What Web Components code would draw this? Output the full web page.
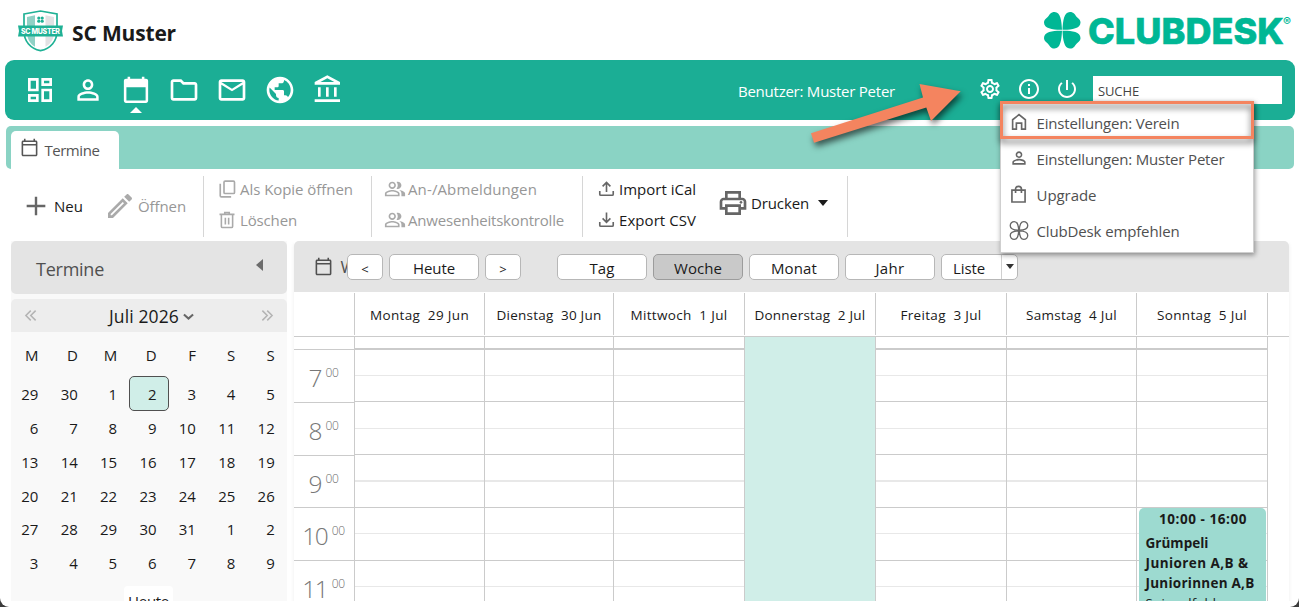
<!DOCTYPE html>
<html lang="de">
<head>
<meta charset="utf-8">
<title>ClubDesk - Termine</title>
<style>
* {
  box-sizing: border-box;
}

html {
  background: #3c3c3c;
}

body {
  margin: 0;
  height: 607px;
  overflow: hidden;
  background: #fff;
  border-radius: 0 0 9px 9px;
  font-family: "Open Sans", "Noto Sans", sans-serif;
  font-size: 15px;
  color: #1a1a1a;
}
</style>
</head>
<body>
<club-app></club-app>

<script>
// Icons, all on a 24 x 24 grid
const ICONS = {
  dashboard: '<path d="M19 5v2h-4V5h4M9 5v6H5V5h4m10 8v6h-4v-6h4M9 17v2H5v-2h4M21 3h-8v6h8V3zM11 3H3v10h8V3zm10 8h-8v10h8V11zm-10 4H3v6h8v-6z"/>',
  person: '<path d="M12 5.9c1.16 0 2.1.94 2.1 2.1s-.94 2.1-2.1 2.1S9.9 9.16 9.9 8s.94-2.1 2.1-2.1m0 9c2.97 0 6.1 1.46 6.1 2.1v1.1H5.9V17c0-.64 3.13-2.1 6.1-2.1M12 4C9.79 4 8 5.79 8 8s1.79 4 4 4 4-1.79 4-4-1.79-4-4-4zm0 9c-2.67 0-8 1.34-8 4v3h16v-3c0-2.66-5.33-4-8-4z"/>',
  event: '<path d="M19.5 3.5h-1.2V2h-1.9v1.5H7.6V2H5.7v1.5H4.500c-.9 0-1.600.700-1.600 1.600v15c0 .900.700 1.600 1.600 1.600h15c.900 0 1.600-.700 1.600-1.600v-15c0-.900-.700-1.600-1.600-1.600zm-.300 16.300H4.800V10h14.400z"/>',
  calendar: '<path d="M20 3h-1V1h-2v2H7V1H5v2H4c-1.1 0-2 .9-2 2v16c0 1.1.9 2 2 2h16c1.1 0 2-.9 2-2V5c0-1.1-.9-2-2-2zm0 18H4V9.500h16V21zM20 7.500H4V5h16z"/>',
  folder: '<path d="M9.17 6l2 2H20v10H4V6h5.17M10 4H4c-1.1 0-1.99.9-1.99 2L2 18c0 1.1.9 2 2 2h16c1.1 0 2-.9 2-2V8c0-1.1-.9-2-2-2h-8l-2-2z"/>',
  mail: '<path d="M22 6c0-1.1-.9-2-2-2H4c-1.1 0-2 .9-2 2v12c0 1.1.9 2 2 2h16c1.1 0 2-.9 2-2V6zm-2 0l-8 5-8-5h16zm0 12H4V8l8 5 8-5v10z"/>',
  globe: '<path d="M12 2C6.48 2 2 6.48 2 12s4.480 10 10 10 10-4.480 10-10S17.520 2 12 2zm-1 17.930c-3.950-.490-7-3.850-7-7.930 0-.620.080-1.210.210-1.790L9 15v1c0 1.100.900 2 2 2v1.930zm6.900-2.540c-.260-.810-1-1.390-1.900-1.390h-1v-3c0-.550-.450-1-1-1H8v-2h2c.550 0 1-.450 1-1V7h2c1.100 0 2-.900 2-2v-.410c2.930 1.190 5 4.060 5 7.410 0 2.080-.800 3.970-2.100 5.390z"/>',
  bank: '<path d="M6.500 10h-2v7h2v-7zm6 0h-2v7h2v-7zm8.500 9H2v2h19v-2zm-2.500-9h-2v7h2v-7zm-7-6.740L16.710 6H6.290l5.210-2.740m0-2.260L2 6v2h19V6l-9.500-5z"/>',
  settings: '<path d="M19.43 12.98c.04-.32.07-.64.07-.98 0-.34-.03-.66-.07-.98l2.11-1.65c.19-.15.24-.42.12-.64l-2-3.46c-.09-.16-.26-.25-.44-.25-.06 0-.12.01-.17.03l-2.49 1c-.52-.4-1.08-.73-1.69-.98l-.38-2.65C14.46 2.18 14.25 2 14 2h-4c-.25 0-.46.18-.49.42l-.38 2.65c-.61.25-1.17.59-1.69.98l-2.49-1c-.06-.02-.12-.03-.18-.03-.17 0-.34.09-.43.25l-2 3.46c-.13.22-.07.49.12.64l2.11 1.65c-.04.32-.07.65-.07.98 0 .33.03.66.07.98l-2.11 1.65c-.19.15-.24.42-.12.64l2 3.46c.09.16.26.25.44.25.06 0 .12-.01.17-.03l2.49-1c.52.4 1.08.73 1.69.98l.38 2.65c.03.24.24.42.49.42h4c.25 0 .46-.18.49-.42l.38-2.65c.61-.25 1.17-.59 1.69-.98l2.49 1c.06.02.12.03.18.03.17 0 .34-.09.43-.25l2-3.46c.12-.22.07-.49-.12-.64l-2.11-1.65zm-1.98-1.71c.04.31.05.52.05.73 0 .21-.02.43-.05.73l-.14 1.13.89.7 1.08.84-.7 1.21-1.27-.51-1.04-.42-.9.68c-.43.32-.84.56-1.25.73l-1.06.43-.16 1.13-.2 1.35h-1.4l-.19-1.35-.16-1.13-1.06-.43c-.43-.18-.83-.41-1.23-.71l-.91-.7-1.06.43-1.27.51-.7-1.21 1.08-.84.89-.7-.14-1.13c-.03-.31-.05-.54-.05-.74s.02-.43.05-.73l.14-1.13-.89-.7-1.08-.84.7-1.21 1.27.51 1.04.42.9-.68c.43-.32.84-.56 1.25-.73l1.06-.43.16-1.13.2-1.35h1.39l.19 1.35.16 1.13 1.06.43c.43.18.83.41 1.23.71l.91.7 1.06-.43 1.27-.51.7 1.21-1.07.85-.89.7.14 1.13zM12 8c-2.21 0-4 1.79-4 4s1.79 4 4 4 4-1.79 4-4-1.79-4-4-4zm0 6c-1.1 0-2-.9-2-2s.9-2 2-2 2 .9 2 2-.9 2-2 2z"/>',
  info: '<path d="M11 7h2v2h-2zm0 4h2v6h-2zm1-9C6.48 2 2 6.48 2 12s4.48 10 10 10 10-4.48 10-10S17.52 2 12 2zm0 18c-4.41 0-8-3.59-8-8s3.59-8 8-8 8 3.59 8 8-3.59 8-8 8z"/>',
  power: '<path d="M13 3h-2v10h2V3zm4.83 2.17l-1.42 1.42C17.99 7.86 19 9.81 19 12c0 3.87-3.13 7-7 7s-7-3.13-7-7c0-2.19 1.01-4.14 2.58-5.42L6.17 5.17C4.23 6.82 3 9.26 3 12c0 4.97 4.03 9 9 9s9-4.03 9-9c0-2.74-1.23-5.18-3.17-6.83z"/>',
  add: '<path d="M19 12.900h-6.100V19h-1.800v-6.100H5v-1.800h6.100V5h1.800v6.100H19z"/>',
  edit: '<path d="M14.06 9.02l.92.92L5.92 19H5v-.92l9.060-9.060M17.660 3c-.250 0-.510.100-.700.290l-1.830 1.830 3.750 3.750 1.830-1.830c.390-.390.390-1.020 0-1.410l-2.340-2.340c-.200-.200-.450-.290-.710-.290zm-3.600 3.190L3 17.250V21h3.750L17.810 9.940l-3.750-3.750z"/>',
  copy: '<path fill="none" stroke="currentColor" stroke-width="2.200" d="M9.500 1.500h11q1.500 0 1.500 1.500v13.500q0 1.500-1.500 1.500h-11Q8 18 8 16.500V3q0-1.500 1.500-1.500zM3 5v16q0 1.500 1.500 1.500h13"/>',
  trash: '<path fill="none" stroke="currentColor" stroke-width="2.100" d="M2 4.500h20M9 4V2h6v2M4.500 4.500v16q0 1.500 1.500 1.500h12q1.500 0 1.500-1.500v-16M9.800 9v9M14.200 9v9"/>',
  people: '<path d="M16.670 13.130C18.040 14.060 19 15.320 19 17v3h4v-3c0-2.180-3.570-3.470-6.330-3.870zM15 12c2.210 0 4-1.790 4-4s-1.790-4-4-4c-.470 0-.910.100-1.330.240C14.500 5.270 15 6.580 15 8s-.500 2.730-1.330 3.760c.420.140.860.240 1.330.240zM9 12c2.210 0 4-1.790 4-4s-1.790-4-4-4-4 1.790-4 4 1.790 4 4 4zm0-6.200c1.200 0 2.200 1 2.200 2.200s-1 2.200-2.200 2.200S6.800 9.200 6.800 8 7.800 5.800 9 5.800zM9 13c-2.670 0-8 1.340-8 4v3h16v-3c0-2.660-5.330-4-8-4zm6.200 5.200H2.800V17c.2-.7 3.500-2.200 6.200-2.200s6 1.500 6.200 2.200z"/>',
  upload: '<path fill="none" stroke="currentColor" stroke-width="2.300" d="M2.500 15.500V20q0 1.500 1.500 1.500h16q1.500 0 1.500-1.500v-4.500M12 17V3.500M6.500 9L12 3.500 17.500 9"/>',
  download: '<path fill="none" stroke="currentColor" stroke-width="2.300" d="M2.500 15.500V20q0 1.500 1.500 1.500h16q1.500 0 1.500-1.500v-4.500M12 2v13.500M6.500 10.500l5.500 5.500 5.500-5.500"/>',
  print: '<path d="M19 8h-1V3H6v5H5c-1.66 0-3 1.34-3 3v6h4v4h12v-4h4v-6c0-1.66-1.34-3-3-3zM8 5h8v3H8V5zm8 12v2H8v-4h8v2zm2-2v-2H6v2H4v-4c0-.55.45-1 1-1h14c.55 0 1 .45 1 1v4h-2z"/><circle cx="18" cy="11.500" r="1"/>',
  home: '<path fill="none" stroke="currentColor" stroke-width="2.200" d="M3.500 21.500V9L12 2.200 20.500 9v12.500h-5V13.500h-7v8z"/>',
  bag: '<path fill="none" stroke="currentColor" stroke-width="2.100" d="M3.700 6.500h16.600v15H3.700zM8.300 10V5.200Q8.300 1.700 12 1.700t3.700 3.500V10"/>',
  clover: '<path fill="none" stroke="currentColor" stroke-width="1.600" d="M11.600 11.600C6 11.400 1.500 9.700 1.500 6.200 1.500 3.500 3.600 1.300 6.300 1.300c3.600 0 5.100 4.700 5.300 10.300zM12.400 11.600C18 11.400 22.500 9.700 22.500 6.200c0-2.700-2.100-4.900-4.800-4.900-3.600 0-5.100 4.700-5.300 10.300zM11.600 12.400C6 12.600 1.500 14.300 1.500 17.800c0 2.700 2.100 4.900 4.800 4.900 3.600 0 5.100-4.700 5.300-10.300zM12.400 12.400C18 12.600 22.500 14.300 22.500 17.800c0 2.700-2.100 4.900-4.800 4.900-3.600 0-5.100-4.700-5.300-10.300z"/>',
  left: '<path fill="none" stroke="currentColor" stroke-width="2.800" d="M12.500 3L3.500 12l9 9M21.500 3l-9 9 9 9"/>',
  right: '<path fill="none" stroke="currentColor" stroke-width="2.800" d="M2.500 3l9 9-9 9M11.500 3l9 9-9 9"/>',
  down: '<path fill="none" stroke="currentColor" stroke-width="4.500" d="M2 7.500l10 9 10-9"/>',
};

// Small helper so every component gets its shadow root the same way
class BaseElement extends HTMLElement {
  constructor() {
    super();
    const shadow = this.attachShadow({ mode: 'open' });
    const template = document.createElement('template');
    template.innerHTML = `<style>* { box-sizing: border-box; }</style>${this.render()}`;
    shadow.append(template.content.cloneNode(true));
  }

  render() {
    return '<slot></slot>';
  }
}

class ClubIcon extends BaseElement {
  render() {
    return `
<style>
:host {
  display: block;
  flex: none;
}
svg {
  display: block;
}
</style>
<svg viewBox="0 0 24 24" fill="currentColor" aria-hidden="true"></svg>`;
  }

  connectedCallback() {
    const size = this.getAttribute('size') || 24;
    const svg = this.shadowRoot.querySelector('svg');
    svg.setAttribute('width', size);
    svg.setAttribute('height', size);
    svg.innerHTML = ICONS[this.getAttribute('name')];
  }
}

// One line of text, tracked so that it fills the given width
class ClubText extends BaseElement {
  render() {
    return `
<style>
:host {
  display: block;
  flex: none;
}
span {
  display: inline-block;
  white-space: pre;
}
</style>
<span><slot></slot></span>`;
  }

  connectedCallback() {
    const width = Number(this.getAttribute('width'));
    const span = this.shadowRoot.querySelector('span');
    const natural = span.getBoundingClientRect().width;
    if (!width || !natural) return;
    const spacing = (width - natural) / this.textContent.length;
    span.style.letterSpacing = `${spacing.toFixed(3)}px`;
  }
}

class ClubHeader extends BaseElement {
  render() {
    return `
<style>
:host {
  display: flex;
  height: 60px;
  padding: 10px 8px 0 18px;
}
.crest {
  flex: none;
  width: 45px;
  height: 42px;
}
.name {
  margin: 5px auto 0 9px;
  font-size: 21px;
  font-weight: 700;
  line-height: 36px;
}
.logo {
  display: flex;
  color: #00b795;
  margin-top: 2px;
}
.brand {
  margin: -2px 0 0 7px;
  font: 800 36px/42px Inter, sans-serif;
  -webkit-text-stroke: 0.6px #00b795;
}
.mark {
  font: 600 12px/14px Inter, sans-serif;
  margin: 3px 0 0 -1px;
}
</style>
<svg class="crest" viewBox="0 0 45 42">
  <path d="M6 4L22.500 1 39 4v17c0 10-6 17.500-16.500 19.700C12 38.500 6 31 6 21z" fill="#fff" stroke="#1fb195" stroke-width="1.700"/>
  <path d="M9 7l8-1.700v31.500C11.500 33.500 9 28 9 22z" fill="#8fd1c5"/>
  <path d="M27.500 5.300L36 7v15c0 6-2.500 11.500-8.500 14.800z" fill="#e2e2e4"/>
  <g fill="#1fb195"><circle cx="20.800" cy="8" r="1.600"/><circle cx="24.200" cy="8" r="1.600"/><circle cx="20.800" cy="11.200" r="1.600"/><circle cx="24.200" cy="11.200" r="1.600"/><path d="M0 15.500h45l-1 5.500 1 5.500H0L1 21z"/></g>
  <text x="22.500" y="23.700" fill="#fff" font-family="Inter, sans-serif" font-weight="800" font-size="7" text-anchor="middle" textLength="39">SC MUSTER</text>
</svg>
<club-text class="name" width="104">SC Muster</club-text>
<div class="logo">
  <svg width="37" height="37" viewBox="0 0 37 37" fill="#00b795">
    <path id="leaf" d="M18 17.700C10 17.900 0 17 0 10.500 0 8.500 1 7.300 2.600 6 4.300 4.700 4.900 3.300 6.200 1.800 7.300.5 8.800 0 10.600 0 16.500 0 17.600 9 18 17.700z"/>
    <path d="M18 17.700C10 17.900 0 17 0 10.500 0 8.500 1 7.300 2.600 6 4.300 4.700 4.900 3.300 6.200 1.800 7.300.5 8.800 0 10.600 0 16.500 0 17.600 9 18 17.700z" transform="matrix(-1 0 0 1 36.500 0)"/>
    <path d="M18 17.700C10 17.900 0 17 0 10.500 0 8.500 1 7.300 2.600 6 4.300 4.700 4.900 3.300 6.200 1.800 7.300.5 8.800 0 10.600 0 16.500 0 17.600 9 18 17.700z" transform="matrix(1 0 0 -1 0 36.500)"/>
    <path d="M18 17.700C10 17.900 0 17 0 10.500 0 8.500 1 7.300 2.600 6 4.300 4.700 4.900 3.300 6.200 1.800 7.300.5 8.800 0 10.600 0 16.500 0 17.600 9 18 17.700z" transform="matrix(-1 0 0 -1 36.500 36.500)"/>
  </svg>
  <club-text class="brand" width="196">CLUBDESK</club-text>
  <span class="mark">®</span>
</div>`;
  }
}

class ClubMenu extends BaseElement {
  render() {
    return `
<style>
:host {
  display: block;
  width: 254px;
  height: 152px;
  padding-top: 4px;
  background: #fff;
  border: 1px solid #cfcfcf;
  box-shadow: 1px 2px 5px rgba(0, 0, 0, 0.4);
  color: #505050;
}
.item {
  display: flex;
  align-items: center;
  height: 36px;
  padding-left: 7.500px;
  line-height: 24px;
}
.item club-text {
  margin: -3px 0 0 8px;
}
club-icon {
  width: 20px;
  display: flex;
  justify-content: center;
  margin-top: -4px;
  color: #666;
}
.marker {
  position: absolute;
  left: -1px;
  top: -1px;
  width: 254px;
  height: 38px;
  border: 3px solid #f4845f;
  filter: drop-shadow(0 4px 3px rgba(0, 0, 0, 0.6));
}
</style>
<div class="item"><club-icon name="home" size="18"></club-icon><club-text width="143">Einstellungen: Verein</club-text></div>
<div class="item"><club-icon name="person" size="22"></club-icon><club-text width="188">Einstellungen: Muster Peter</club-text></div>
<div class="item"><club-icon name="bag" size="19"></club-icon><club-text width="60">Upgrade</club-text></div>
<div class="item"><club-icon name="clover" size="21"></club-icon><club-text width="143">ClubDesk empfehlen</club-text></div>
<div class="marker"></div>`;
  }
}

class ClubNavbar extends BaseElement {
  render() {
    return `
<style>
:host {
  position: relative;
  display: flex;
  height: 60px;
  margin: 0 4px 0 5px;
  padding: 0 13px 0 11.300px;
  border-radius: 9px;
  background: #1bae95;
  color: #fff;
}
nav {
  display: flex;
  padding-top: 6px;
}
.entry {
  width: 48px;
  height: 48px;
  display: flex;
  flex-direction: column;
  align-items: center;
  justify-content: center;
}
.entry.active {
  padding-top: 7px;
}
.entry.active::after {
  content: "";
  margin-top: 1px;
  border: 6px solid transparent;
  border-top: 0;
  border-bottom-color: #fff;
}
.user {
  margin: 20px 0 0 auto;
  line-height: 22px;
}
.tools {
  display: flex;
  gap: 14.500px;
  margin: 17px 14px 0 83px;
}
.search {
  width: 189px;
  height: 28px;
  margin-top: 16px;
  padding: 2px 5px;
  background: #fff;
  color: #444;
  font-size: 13px;
  line-height: 26px;
}
club-menu {
  position: absolute;
  left: 995px;
  top: 41px;
  z-index: 2;
}
.arrow {
  position: absolute;
  left: 795px;
  top: 10px;
  z-index: 3;
  overflow: visible;
  filter: drop-shadow(2px 4px 3px rgba(0, 0, 0, 0.6));
}
</style>
<nav>
  <div class="entry"><club-icon name="dashboard" size="32"></club-icon></div>
  <div class="entry"><club-icon name="person" size="32"></club-icon></div>
  <div class="entry active"><club-icon name="event" size="32"></club-icon></div>
  <div class="entry"><club-icon name="folder" size="32"></club-icon></div>
  <div class="entry"><club-icon name="mail" size="32"></club-icon></div>
  <div class="entry"><club-icon name="globe" size="32"></club-icon></div>
  <div class="entry"><club-icon name="bank" size="32"></club-icon></div>
</nav>
<club-text class="user" width="157">Benutzer: Muster Peter</club-text>
<div class="tools">
  <club-icon name="settings"></club-icon>
  <club-icon name="info"></club-icon>
  <club-icon name="power"></club-icon>
</div>
<div class="search"><club-text width="41">SUCHE</club-text></div>
<svg class="arrow" width="180" height="90"><path d="M11 63.300L123 27.500 119.500 14 160.700 21.300 131 51 126.300 37.500 14 72.700z" fill="#f4845f"/></svg>
<club-menu></club-menu>`;
  }
}

class ClubTabs extends BaseElement {
  render() {
    return `
<style>
:host {
  display: flex;
  align-items: flex-end;
  height: 43px;
  margin: 6px 5px 0 6px;
  padding-left: 5px;
  border-radius: 5px;
  background: #8ad3c4;
}
.tab {
  display: flex;
  width: 108px;
  height: 38px;
  padding: 7px 9.400px;
  gap: 5px;
  border-radius: 5px 5px 0 0;
  background: #fff;
  color: #555;
}
club-text {
  line-height: 24px;
}
</style>
<div class="tab"><club-icon name="calendar" size="19"></club-icon><club-text width="55">Termine</club-text></div>`;
  }
}

class ToolButton extends BaseElement {
  render() {
    return `
<style>
:host {
  display: flex;
  align-items: center;
  height: 31px;
  color: #1a1a1a;
}
:host([disabled]) {
  color: #979797;
}
club-icon {
  color: #666;
}
:host([disabled]) club-icon {
  color: #aaa;
}
club-text {
  margin-left: var(--gap, 5px);
}
</style>
<club-icon></club-icon><club-text></club-text><slot></slot>`;
  }

  constructor() {
    super();
    const icon = this.shadowRoot.querySelector('club-icon');
    const text = this.shadowRoot.querySelector('club-text');
    icon.setAttribute('name', this.getAttribute('icon'));
    icon.setAttribute('size', this.getAttribute('size'));
    text.setAttribute('width', this.getAttribute('width'));
    text.textContent = this.getAttribute('label');
  }
}

class ClubToolbar extends BaseElement {
  render() {
    return `
<style>
:host {
  display: flex;
  height: 72px;
  padding: 4px 0 0 20px;
}
.group {
  display: flex;
  height: 62px;
  align-items: center;
}
.stack {
  display: flex;
  flex-direction: column;
}
.line {
  width: 1px;
  height: 61px;
  margin-top: 3px;
  background: #d6d6d6;
}
.caret {
  margin-left: 9px;
  border: 5px solid transparent;
  border-top: 6px solid #1a1a1a;
  border-bottom: 0;
}
</style>
<div class="group" style="gap: 21px; margin-right: 17px; padding-top: 4px; --gap: 2px">
  <tool-button icon="add" size="32" label="Neu" width="29"></tool-button>
  <tool-button icon="edit" size="32" label="Öffnen" width="48" disabled></tool-button>
</div>
<div class="line"></div>
<div class="stack" style="margin: 0 18px 0 14px; --gap: 4px">
  <tool-button icon="copy" size="18" label="Als Kopie öffnen" width="113" disabled></tool-button>
  <tool-button icon="trash" size="18" label="Löschen" width="57" disabled></tool-button>
</div>
<div class="line"></div>
<div class="stack" style="margin: 0 18px 0 12px; --gap: 2px">
  <tool-button icon="people" size="22" label="An-/Abmeldungen" width="129" disabled></tool-button>
  <tool-button icon="people" size="22" label="Anwesenheitskontrolle" width="156" disabled></tool-button>
</div>
<div class="line"></div>
<div class="stack" style="margin: 0 21px 0 15px; --gap: 4px">
  <tool-button icon="upload" size="17" label="Import iCal" width="77"></tool-button>
  <tool-button icon="download" size="17" label="Export CSV" width="77"></tool-button>
</div>
<div class="group" style="--gap: 2px; padding-bottom: 3px; margin-right: 19px">
  <tool-button icon="print" size="32" label="Drucken" width="58"><span class="caret"></span></tool-button>
</div>
<div class="line"></div>`;
  }
}

class MiniCalendar extends BaseElement {
  render() {
    const weekdays = ['M', 'D', 'M', 'D', 'F', 'S', 'S'];
    const days = [29, 30];
    for (let day = 1; day <= 31; day++) days.push(day);
    for (let day = 1; day <= 9; day++) days.push(day);

    return `
<style>
:host {
  display: block;
  width: 276px;
  height: 360px;
  overflow: hidden;
  background: #f9f9f9;
}
.title {
  display: flex;
  justify-content: space-between;
  height: 53px;
  padding: 18px 24px 0 25px;
  border-radius: 5px;
  background: #e4e4e4;
  color: #505050;
  font-size: 18px;
  line-height: 20px;
}
.fold {
  height: 12px;
  border: 6px solid transparent;
  border-right: 7px solid #6c6c6c;
  border-left: 0;
}
.month {
  display: flex;
  align-items: center;
  justify-content: space-between;
  height: 33px;
  margin-top: 5px;
  padding: 0 13px;
  background: #ededed;
  border-radius: 5px 5px 0 0;
  color: #b4b4b4;
}
.current {
  display: flex;
  align-items: center;
  gap: 4px;
  margin-right: -5px;
  padding-top: 1px;
  color: #1a1a1a;
  font-size: 17.500px;
  line-height: 33px;
}
.current club-icon {
  color: #666;
}
.grid {
  display: grid;
  grid-template-columns: repeat(7, 39.400px);
  grid-template-rows: 44px 35px 34.500px repeat(4, 33.500px);
}
.cell {
  display: flex;
  align-items: center;
  justify-content: flex-end;
  padding: 0 12px 0 0;
}
.head {
  padding-top: 1px;
}
.today {
  background: #d0eee8;
  border: 1px solid #505050;
  border-radius: 5px;
  padding-right: 11px;
}
.jump {
  width: 49px;
  height: 30px;
  margin: 6px 0 0 113px;
  display: flex;
  justify-content: center;
  background: #fff;
  border-radius: 4px;
  line-height: 30px;
}
</style>
<div class="title">
  <club-text width="68">Termine</club-text>
  <span class="fold"></span>
</div>
<div class="month">
  <club-icon name="left" size="13"></club-icon>
  <div class="current"><club-text width="70">Juli 2026</club-text><club-icon name="down" size="11"></club-icon></div>
  <club-icon name="right" size="13"></club-icon>
</div>
<div class="grid">
  ${weekdays.map((day) => `<div class="cell head">${day}</div>`).join('')}
  ${days.map((day, index) => `<div class="cell ${index === 3 ? 'today' : ''}">${day}</div>`).join('')}
</div>
<div class="jump"><club-text width="41">Heute</club-text></div>`;
  }
}

class ClubButton extends BaseElement {
  render() {
    return `
<style>
:host {
  display: flex;
  justify-content: center;
  flex: none;
  width: 90px;
  height: 26px;
  background: #fff;
  border: 1px solid #b7b7b7;
  border-radius: 5px;
  line-height: 27px;
}
:host([small]) {
  width: 36px;
  font-size: 13px;
  line-height: 28px;
}
:host([active]) {
  background: #c9c9c9;
  border-color: #9c9c9c;
}
</style>
<slot></slot>`;
  }
}

class WeekView extends BaseElement {
  render() {
    const days = [
      ['Montag  29 Jun', 99],
      ['Dienstag  30 Jun', 105],
      ['Mittwoch  1 Jul', 97],
      ['Donnerstag  2 Jul', 111],
      ['Freitag  3 Jul', 81],
      ['Samstag  4 Jul', 91],
      ['Sonntag  5 Jul', 90],
    ];
    const hours = [7, 8, 9, 10, 11];
    const slots = '<i></i>'.repeat(11);

    return `
<style>
:host {
  display: block;
  width: 995px;
  height: 360px;
  overflow: hidden;
  box-shadow: 0 3px 4px rgba(0, 0, 0, 0.07);
}
.bar {
  display: flex;
  height: 51px;
  padding: 13px 0 0 20.400px;
  border-radius: 5px 5px 0 0;
  background: #e4e4e4;
}
.title {
  display: flex;
  gap: 7px;
  width: 32.600px;
  height: 26px;
  padding-top: 3px;
  overflow: hidden;
  color: #505050;
}
.title span {
  font-size: 17px;
  line-height: 20px;
}
.buttons {
  display: flex;
  gap: 6px;
}
.buttons + .buttons {
  margin-left: 36px;
}
.list {
  width: 77px;
  justify-content: flex-start;
  padding-left: 11px;
}
.more {
  display: flex;
  justify-content: center;
  width: 16px;
  margin-left: 16.500px;
  padding: 9px 0 0 0;
  border-left: 1px solid #d0d0d0;
}
.more::before {
  content: "";
  height: 5px;
  border: 4px solid transparent;
  border-top: 5px solid #333;
  border-bottom: 0;
}
.head,
.body {
  display: grid;
  grid-template-columns: 60px 130px 129px 131px 131px 131px 130px 131px 22px;
}
.head {
  height: 45px;
  padding-top: 1px;
  border-bottom: 1px solid #cbcbcb;
}
.head div {
  display: flex;
  justify-content: center;
  height: 42px;
  border-left: 1px solid #cbcbcb;
  font-size: 13.500px;
  line-height: 44px;
}
.head div:first-child {
  border: 0;
}
.body {
  height: 264px;
}
.day {
  display: grid;
  grid-template-rows: 13px 26px 26px 27px 26px 27px 26px 26px 27px 26px 27px;
  height: 264px;
  overflow: hidden;
  border-left: 1px solid #cbcbcb;
}
.day i {
  border-bottom: 1px solid #cbcbcb;
}
.day i:nth-child(even) {
  border-color: #e8e8e8;
}
.day i:first-child,
.day i:nth-child(6) {
  border-bottom-width: 2px;
}
.today {
  background: #d0eee8;
}
.times {
  display: grid;
  grid-template-rows: 13px 53px 53px 52px 53px 53px;
  height: 264px;
  overflow: hidden;
  color: #777;
  font-weight: 300;
}
.times div {
  display: flex;
  justify-content: center;
  gap: 4.500px;
  padding-right: 1px;
  border-bottom: 1px solid #cbcbcb;
  font-size: 24.500px;
  letter-spacing: -1.500px;
  line-height: 55px;
}
.times sup {
  color: #6c6c6c;
  font-size: 12px;
  line-height: 46px;
  vertical-align: baseline;
  letter-spacing: -0.400px;
}
.sunday {
  position: relative;
}
.event {
  position: absolute;
  left: 2px;
  top: 171px;
  width: 127px;
  height: 110px;
  padding: 1px 6.500px;
  border-radius: 5px;
  background: #9ddad0;
  font-size: 13.500px;
  font-weight: 700;
  line-height: 20px;
}
.event .time {
  margin: 0 0 4px 13.500px;
}
.event .place {
  font-size: 13px;
  font-weight: 400;
}
</style>
<div class="bar">
  <div class="title"><club-icon name="calendar" size="19"></club-icon><span>W</span></div>
  <div class="buttons">
    <club-button small>&lt;</club-button>
    <club-button><club-text width="42">Heute</club-text></club-button>
    <club-button small>&gt;</club-button>
  </div>
  <div class="buttons">
    <club-button><club-text width="25">Tag</club-text></club-button>
    <club-button active><club-text width="48">Woche</club-text></club-button>
    <club-button><club-text width="46">Monat</club-text></club-button>
    <club-button><club-text width="29">Jahr</club-text></club-button>
    <club-button class="list"><club-text width="32">Liste</club-text><span class="more"></span></club-button>
  </div>
</div>
<div class="head">
  <div></div>
  ${days.map(([label, width]) => `<div><club-text width="${width}">${label}</club-text></div>`).join('')}
  <div></div>
</div>
<div class="body">
  <div class="times"><div></div>${hours.map((hour) => `<div>${hour}<sup>00</sup></div>`).join('')}</div>
  <div class="day">${slots}</div>
  <div class="day">${slots}</div>
  <div class="day">${slots}</div>
  <div class="day today"></div>
  <div class="day">${slots}</div>
  <div class="day">${slots}</div>
  <div class="day sunday">${slots}
    <div class="event">
      <club-text class="time" width="88">10:00 - 16:00</club-text>
      <club-text width="63">Grümpeli</club-text>
      <club-text width="103">Junioren A,B &amp;</club-text>
      <club-text width="109">Juniorinnen A,B</club-text>
      <club-text class="place" width="71">Spiegelfeld</club-text>
    </div>
  </div>
  <div class="day"></div>
</div>`;
  }
}

class ClubApp extends BaseElement {
  render() {
    return `
<style>
:host {
  display: block;
  height: 601px;
  overflow: hidden;
}
main {
  display: flex;
  gap: 7px;
  padding-left: 11px;
}
</style>
<club-header></club-header>
<club-navbar></club-navbar>
<club-tabs></club-tabs>
<club-toolbar></club-toolbar>
<main>
  <mini-calendar></mini-calendar>
  <week-view></week-view>
</main>`;
  }
}

customElements.define('club-app', ClubApp);
customElements.define('club-header', ClubHeader);
customElements.define('club-navbar', ClubNavbar);
customElements.define('club-menu', ClubMenu);
customElements.define('club-tabs', ClubTabs);
customElements.define('club-toolbar', ClubToolbar);
customElements.define('tool-button', ToolButton);
customElements.define('mini-calendar', MiniCalendar);
customElements.define('week-view', WeekView);
customElements.define('club-button', ClubButton);
customElements.define('club-icon', ClubIcon);
// last, because it measures text that is already laid out
customElements.define('club-text', ClubText);
</script>
</body>
</html>
